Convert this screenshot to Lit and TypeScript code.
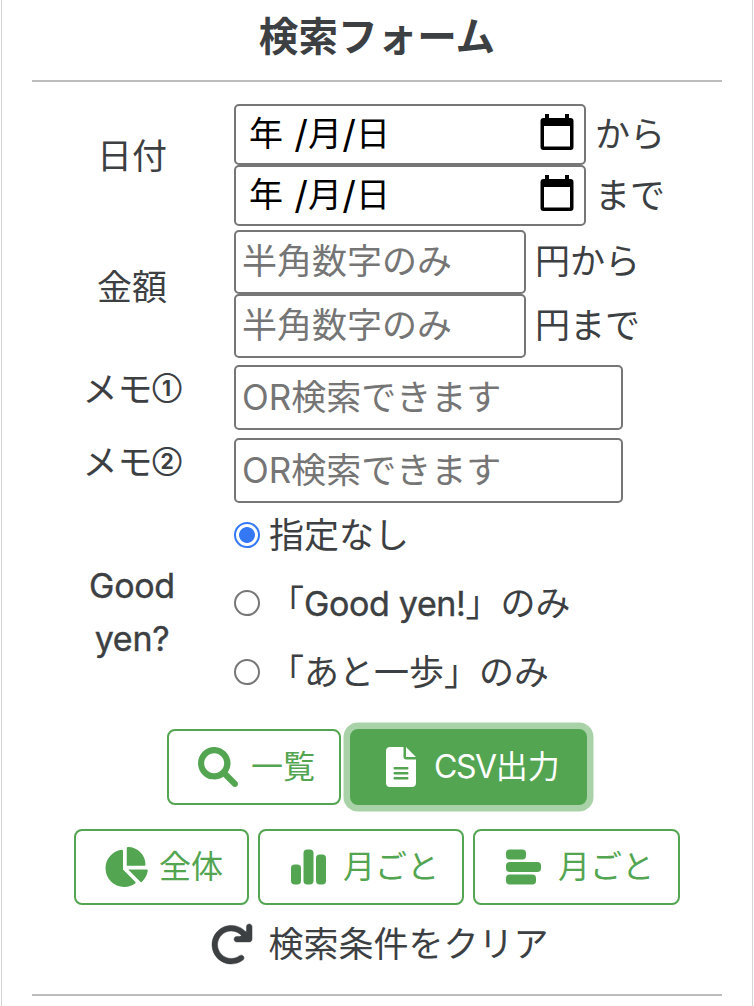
import { LitElement, html, css, svg } from "lit";
import { customElement } from "lit/decorators.js";

const icons = {
  search: {
    box: "0 0 512 512",
    body: svg`<path d="M500.3 443.7l-119.7-119.7c27.22-40.41 40.65-90.9 33.46-144.7C401.8 87.79 326.8 13.32 235.2 1.723C99.01-15.51-15.51 99.01 1.724 235.2c11.6 91.64 86.08 166.7 177.6 178.9c53.8 7.189 104.3-6.236 144.7-33.46l119.7 119.7c15.62 15.62 40.95 15.62 56.57 0C515.9 484.7 515.9 459.3 500.3 443.7zM79.1 208c0-70.58 57.42-128 128-128s128 57.42 128 128c0 70.58-57.42 128-128 128S79.1 278.6 79.1 208z"/>`,
  },
  file: {
    box: "0 0 384 512",
    body: svg`<path d="M256 0v128h128L256 0zM224 128L224 0H48C21.49 0 0 21.49 0 48v416C0 490.5 21.49 512 48 512h288c26.51 0 48-21.49 48-48V160h-127.1C238.3 160 224 145.7 224 128zM272 416h-160C103.2 416 96 408.8 96 400C96 391.2 103.2 384 112 384h160c8.836 0 16 7.162 16 16C288 408.8 280.8 416 272 416zM272 352h-160C103.2 352 96 344.8 96 336C96 327.2 103.2 320 112 320h160c8.836 0 16 7.162 16 16C288 344.8 280.8 352 272 352zM288 272C288 280.8 280.8 288 272 288h-160C103.2 288 96 280.8 96 272C96 263.2 103.2 256 112 256h160C280.8 256 288 263.2 288 272z"/>`,
  },
  pie: {
    box: "0 0 576 512",
    body: svg`<path d="M304 16.58C304 7.555 310.1 0 320 0C443.7 0 544 100.3 544 224C544 233 536.4 240 527.4 240H304V16.58zM32 272C32 150.7 122.1 50.34 238.1 34.25C248.2 32.99 256 40.98 256 50.72V288L412.5 444.5C419.2 451.2 418.7 462.2 411 467.7C371.8 495.6 323.8 512 272 512C139.5 512 32 404.6 32 272zM558.4 288C567.3 288 574.8 295.8 573.3 305.5C565.3 360.2 538.4 408.8 499.9 444.5C493.4 450.6 483.4 450.2 477.2 443.9L321.6 288H558.4z"/>`,
  },
  columns: {
    box: "0 0 448 512",
    body: svg`<rect x="0" y="224" width="128" height="256" rx="48"/><rect x="160" y="32" width="128" height="448" rx="48"/><rect x="320" y="96" width="128" height="384" rx="48"/>`,
  },
  bars: {
    box: "0 0 448 512",
    body: svg`<rect x="0" y="32" width="256" height="128" rx="48"/><rect x="0" y="192" width="448" height="128" rx="48"/><rect x="0" y="352" width="384" height="128" rx="48"/>`,
  },
  reset: {
    box: "32 16 464 464",
    body: svg`<path stroke="currentColor" stroke-width="6" d="M496 48V192c0 17.69-14.31 32-32 32H320c-17.69 0-32-14.31-32-32s14.31-32 32-32h63.39c-29.97-39.7-77.25-63.78-127.6-63.78C167.7 96.22 96 167.9 96 256s71.69 159.8 159.8 159.8c34.88 0 68.03-11.03 95.88-31.94c14.22-10.53 34.22-7.75 44.81 6.375c10.59 14.16 7.75 34.22-6.375 44.81c-39.03 29.28-85.36 44.86-134.2 44.86C132.5 479.9 32 379.4 32 256s100.5-223.9 223.9-223.9c69.15 0 134 32.47 176.1 86.12V48c0-17.69 14.31-32 32-32S496 30.31 496 48z"/><path d="M432 90V170H350z"/>`,
  },
  calendar: {
    box: "0 0 34 38",
    body: svg`<path fill-rule="evenodd" d="M5 0h4v4h16V0h4v4h1.500a3 3 0 0 1 3 3v26a3 3 0 0 1-3 3H3.500a3 3 0 0 1-3-3V7a3 3 0 0 1 3-3H5zM4 12v20.500h26V12z"/>`,
  },
};

type IconName = keyof typeof icons;

const icon = (name: IconName) =>
  html`<svg class="icon ${name}" viewBox=${icons[name].box} fill="currentColor" aria-hidden="true">${icons[name].body}</svg>`;

@customElement("app-root")
export class AppRoot extends LitElement {
  static styles = css`
    * { box-sizing: border-box; }
    :host {
      display: block;
      height: 1006px;
      overflow: hidden;
      background: #fff;
      color: #3c4043;
      font-family: Inter, "Noto Sans CJK JP", sans-serif;
      font-size: 35px;
      line-height: 52px;
    }
    .panel {
      height: 1006px;
      margin: 0 1px;
      padding: 0 30px;
      border: solid #d6d6d6;
      border-width: 0 1px;
    }
    .title {
      margin: 0;
      height: 82px;
      padding-top: 11px;
      border-bottom: 2px solid #bdbdbd;
      text-align: center;
      font-size: 39.6px;
      font-weight: 700;
    }
    .form {
      display: grid;
      grid-template-columns: 200px 1fr;
      column-gap: 2px;
      padding-top: 22px;
      grid-template-rows: 126px 135px 73px 73px 218px;
    }
    .label { text-align: center; white-space: nowrap; }
    .label.date { padding-top: 26px; }
    .label.amount { padding-top: 31px; }
    .label.memo {
      display: flex;
      justify-content: center;
      align-items: center;
      height: 48px;
    }
    .number { font-size: 21px; font-weight: 700; line-height: 48px; }
    .label.good { padding-top: 48px; line-height: 53px; font-size: 34px; letter-spacing: -0.3px; }
    .label.good, .latin { -webkit-text-stroke: 0.4px currentColor; }
    .line { display: flex; align-items: center; gap: 9px; white-space: nowrap; }
    .suffix { padding-bottom: 2px; }
    .field {
      border: 2px solid #767676;
      border-radius: 5px;
      background: #fff;
      font: inherit;
      padding: 0 6px 2px;
      margin: 0;
      display: block;
      outline: none;
    }
    .field::placeholder { color: #757575; opacity: 1; }
    .field.date {
      width: 352px;
      height: 61px;
      display: flex;
      align-items: center;
      padding: 0 10px 1px 13px;
      color: #000;
      font-size: 34px;
    }
    .year { margin-right: 11px; }
    .slash { font-size: 38px; width: 14px; text-align: center; }
    .calendar { width: 34px; height: 38px; margin: 0 0 2px auto; }
    .field.yen { width: 292px; height: 64px; }
    .field.memo { width: 389px; height: 65px; }
    .choice { display: flex; align-items: center; gap: 9px; height: 68.5px; white-space: nowrap; }
    .choice:first-child { height: 48px; margin-bottom: 10px; }
    .dot {
      width: 26px;
      height: 26px;
      flex: none;
      border: 2px solid #767676;
      border-radius: 50%;
    }
    .dot.on {
      border-color: #3478f6;
      background: radial-gradient(circle, #3478f6 7.5px, #fff 8.3px);
    }
    .latin { font-size: 34px; letter-spacing: -0.35px; }
    .actions { display: flex; justify-content: center; gap: 9px; }
    .actions.charts { margin-top: 24px; }
    .button {
      height: 76px;
      display: flex;
      align-items: center;
      border: 2px solid #53a551;
      border-radius: 8px;
      background: #fff;
      color: #53a551;
      font: inherit;
      font-size: 32px;
      padding: 0 0 0 29px;
      margin: 0;
      white-space: nowrap;
    }
    .icon { display: block; flex: none; }
    .button .icon { height: 40px; }
    .search { width: 40px; margin-right: 13px; }
    .file { width: 30px; margin-right: 18px; }
    .pie { width: 45px; margin-right: 11px; }
    .columns, .bars { width: 35px; margin-right: 17px; }
    .button.list { width: 174px; }
    .button.csv {
      width: 237px;
      padding-left: 34px;
      background: #53a551;
      color: #fff;
      box-shadow: 0 0 0 6.5px #a9d2a8;
    }
    .csv .code { letter-spacing: -1.4px; }
    .button.total { width: 175px; padding-left: 27px; }
    .button.month { width: 206px; padding-left: 31px; }
    .button.month:last-child { width: 207px; }
    .clear {
      display: flex;
      justify-content: center;
      align-items: center;
      gap: 16px;
      height: 91px;
      padding: 0 0 12px 7px;
      border-bottom: 2px solid #bdbdbd;
    }
    .reset { width: 40px; height: 40px; overflow: visible; }
  `;

  private dateLine(suffix: string) {
    return html`<div class="line">
      <div class="field date">
        <span class="year">年</span><span class="slash">/</span><span>月</span><span class="slash">/</span><span>日</span>
        ${icon("calendar")}
      </div>
      <span class="suffix">${suffix}</span>
    </div>`;
  }

  private yenLine(suffix: string) {
    return html`<div class="line">
      <input class="field yen" placeholder="半角数字のみ" /><span class="suffix">${suffix}</span>
    </div>`;
  }

  private memoRow(mark: string) {
    return html`<div class="label memo"><span>メモ</span><span class="number">${mark}</span></div>
      <div><input class="field memo" placeholder="OR検索できます" /></div>`;
  }

  render() {
    return html`<main class="panel">
      <h1 class="title">検索フォーム</h1>
      <div class="form">
        <div class="label date">日付</div>
        <div>${this.dateLine("から")}${this.dateLine("まで")}</div>
        <div class="label amount">金額</div>
        <div>${this.yenLine("円から")}${this.yenLine("円まで")}</div>
        ${this.memoRow("①")}${this.memoRow("②")}
        <div class="label good">Good<br />yen?</div>
        <div>
          <div class="choice"><span class="dot on"></span><span>指定なし</span></div>
          <div class="choice"><span class="dot"></span><span>「<span class="latin">Good yen!</span>」のみ</span></div>
          <div class="choice"><span class="dot"></span><span>「あと一歩」のみ</span></div>
        </div>
      </div>
      <div class="actions">
        <button class="button list">${icon("search")}一覧</button>
        <button class="button csv">${icon("file")}<span><span class="code">CSV</span>出力</span></button>
      </div>
      <div class="actions charts">
        <button class="button total">${icon("pie")}全体</button>
        <button class="button month">${icon("columns")}月ごと</button>
        <button class="button month">${icon("bars")}月ごと</button>
      </div>
      <div class="clear">${icon("reset")}<span>検索条件をクリア</span></div>
    </main>`;
  }
}
